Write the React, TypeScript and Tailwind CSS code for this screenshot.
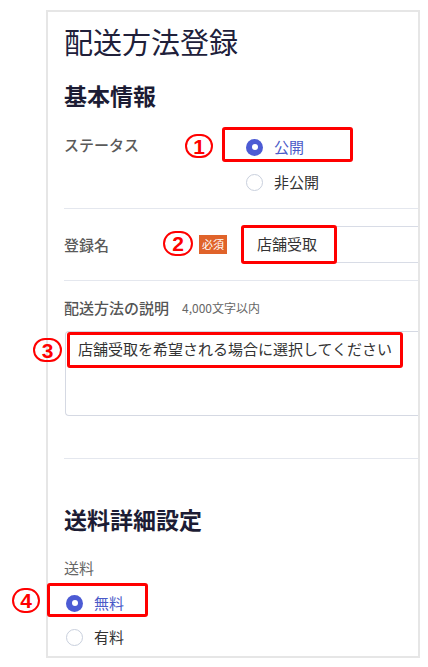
import React from "react";

const Mark = ({ n, className }: { n: string; className: string }) => (
  <span
    className={`absolute flex items-center justify-center rounded-full border-2 border-[#ff0000] text-[21px] leading-none font-bold text-[#ff0000] ${className}`}
    style={{ fontFamily: '"Liberation Sans", sans-serif' }}
  >
    {n}
  </span>
);

const Radio = ({ label, checked }: { label: string; checked?: boolean }) => (
  <div className="flex h-[24px] items-center gap-[11px]">
    {checked ? (
      <span className="flex h-[17px] w-[17px] items-center justify-center rounded-full bg-[#4c5bd4]">
        <span className="h-[6px] w-[6px] rounded-full bg-white" />
      </span>
    ) : (
      <span className="h-[17px] w-[17px] rounded-full border-[1.5px] border-[#c9d0dd] bg-white" />
    )}
    <span
      className={`text-[15px] leading-[20px] ${checked ? "text-[#4b5ac8]" : "text-[#333]"}`}
    >
      {label}
    </span>
  </div>
);

export default function App() {
  return (
    <div
      className="min-h-screen bg-white pt-[10px] pl-[46px] pr-[8px]"
      style={{ fontFamily: '"Noto Sans CJK JP", "Noto Sans", sans-serif' }}
    >
      <div className="h-[648px] border-2 border-[#e6e6e6] pl-[16px] pt-[9px]">
        <h1 className="text-[29px] leading-[40px] font-normal text-[#20203a]">
          配送方法登録
        </h1>

        <h2 className="mt-[18px] text-[23px] leading-[32px] font-bold text-[#1c1c34]">
          基本情報
        </h2>

        {/* ステータス */}
        <div className="mt-[24px] flex items-start">
          <div className="w-[167px] text-[15px] leading-[20px] font-medium text-[#5a5a5a]">
            ステータス
          </div>
          <div className="ml-[15px] flex flex-col gap-[11px]">
            <div className="relative">
              <Radio label="公開" checked />
              <span className="absolute -left-[24px] -top-[8px] h-[35px] w-[131px] rounded-[3px] border-[3px] border-[#ff0000]" />
              <Mark n="1" className="-left-[61px] -top-[1px] h-[24px] w-[28px]" />
            </div>
            <Radio label="非公開" />
          </div>
        </div>

        <div className="mt-[14px] h-px bg-[#e4e7ee]" />

        {/* 登録名 */}
        <div className="mt-[17px] flex items-center">
          <div className="w-[135px] text-[15px] leading-[20px] font-medium text-[#5a5a5a]">
            登録名
          </div>
          <div className="relative">
            <span className="flex h-[19px] w-[28px] items-center justify-center bg-[#e0632a] text-[11px] leading-none text-white">
              必須
            </span>
            <Mark n="2" className="-left-[36px] -top-[4px] h-[25px] w-[30px]" />
          </div>
          <div className="relative ml-[15px] flex h-[37px] flex-1 items-center border border-r-0 border-[#d8dce6] pl-[14px] text-[15px] text-[#333]">
            店舗受取
            <span className="absolute -left-[2px] -top-[2px] h-[39px] w-[96px] rounded-[3px] border-[3px] border-[#ff0000]" />
          </div>
        </div>

        <div className="mt-[17px] h-px bg-[#e4e7ee]" />

        {/* 配送方法の説明 */}
        <div className="mt-[17px] flex items-center text-[#555]">
          <span className="text-[15px] leading-[20px] font-medium">配送方法の説明</span>
          <span className="ml-[13px] text-[12px] leading-[20px] text-[#666]">4,000文字以内</span>
        </div>

        <div className="relative ml-px mt-[13px] h-[85px] rounded-l-[4px] border border-r-0 border-[#d5d9e3] pl-[12px] pt-[7px]">
          <p className="text-[15px] leading-[20px] text-[#333]">
            店舗受取を希望される場合に選択してください
          </p>
          <span className="absolute left-[1px] top-[0px] h-[36px] w-[336px] rounded-[3px] border-[3px] border-[#ff0000]" />
          <Mark n="3" className="-left-[33px] top-[6px] h-[24px] w-[29px]" />
        </div>

        <div className="mt-[42px] h-px bg-[#e4e7ee]" />

        <h2 className="mt-[44px] text-[23px] leading-[32px] font-bold text-[#1c1c34]">
          送料詳細設定
        </h2>

        <div className="mt-[23px] text-[15px] leading-[20px] text-[#666]">送料</div>

        <div className="ml-[2px] mt-[13px] flex flex-col gap-[10px]">
          <div className="relative">
            <Radio label="無料" checked />
            <span className="absolute -left-[19px] -top-[8px] h-[34px] w-[101px] rounded-[3px] border-[3px] border-[#ff0000]" />
            <Mark n="4" className="-left-[54px] -top-[3px] h-[25px] w-[28px]" />
          </div>
          <Radio label="有料" />
        </div>
      </div>
    </div>
  );
}
